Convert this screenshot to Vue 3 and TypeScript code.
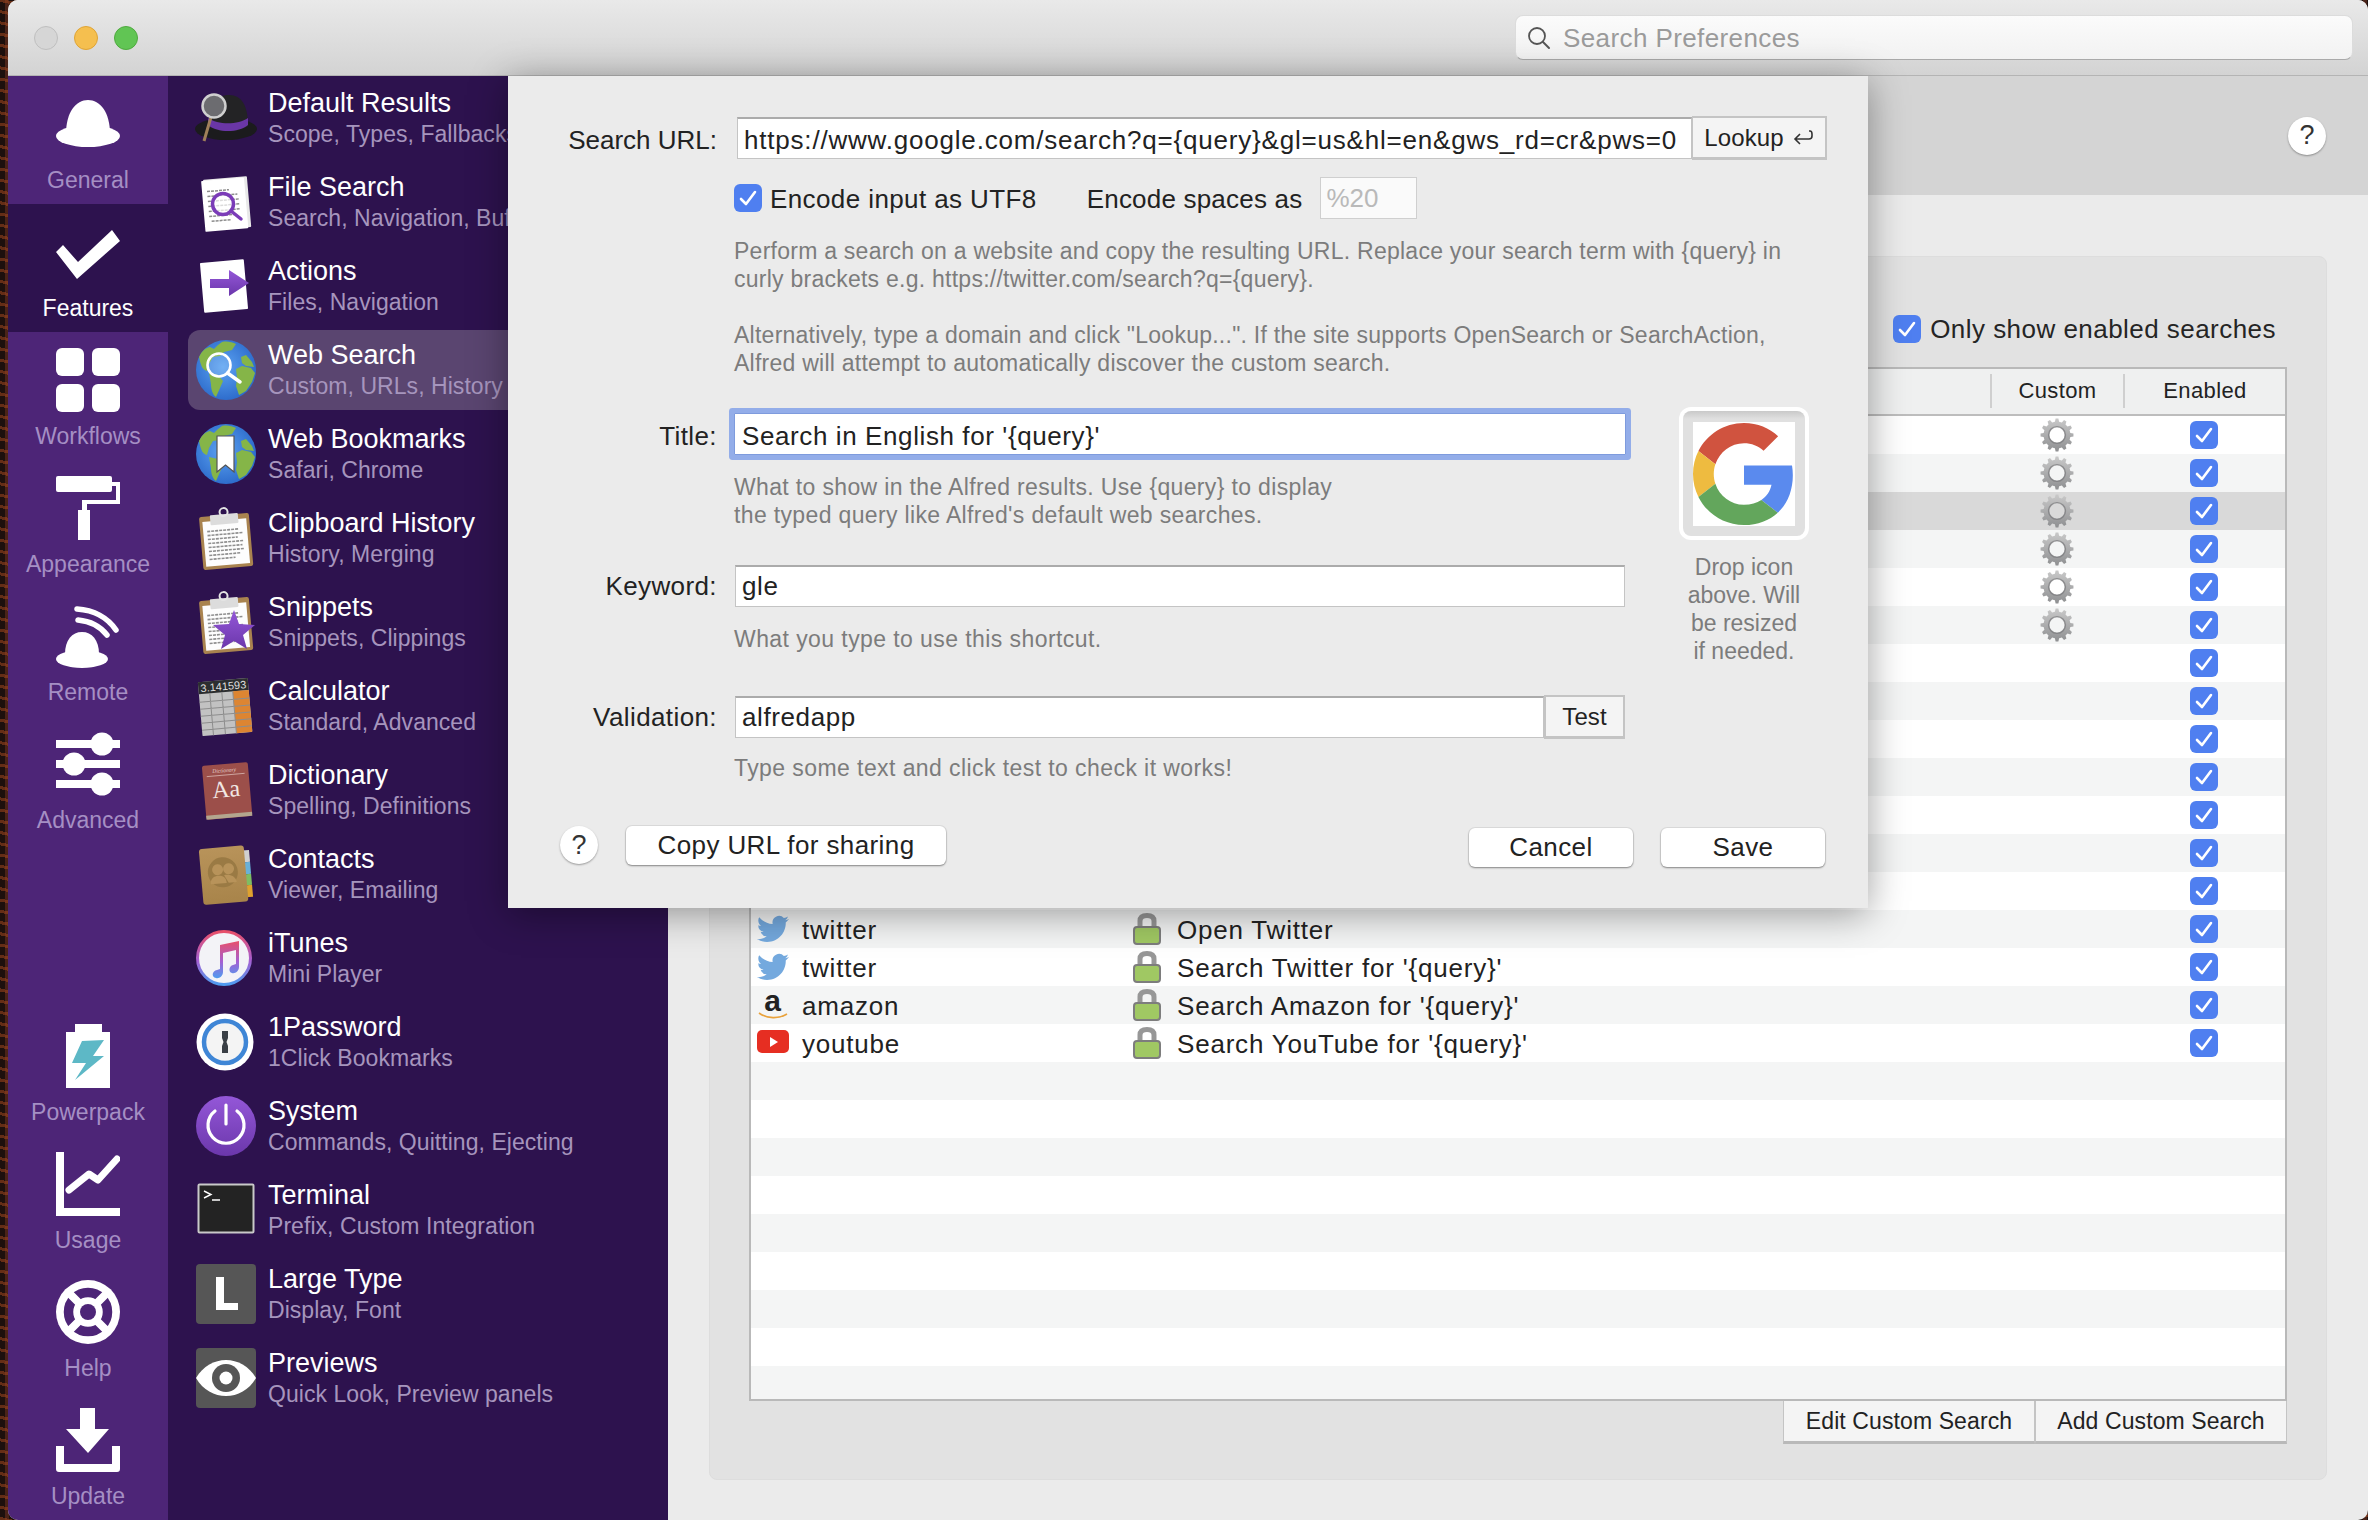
<script setup lang="ts">
// Alfred preferences - web search, custom search sheet
interface NavItem {
  key: string
  label: string
  active?: boolean
}

interface FeatureItem {
  icon: string
  title: string
  sub: string
  selected?: boolean
}

interface SearchRow {
  icon?: string
  keyword?: string
  title?: string
  custom?: boolean
  enabled?: boolean
  selected?: boolean
}

const topNav: NavItem[] = [
  { key: 'general', label: 'General' },
  { key: 'features', label: 'Features', active: true },
  { key: 'workflows', label: 'Workflows' },
  { key: 'appearance', label: 'Appearance' },
  { key: 'remote', label: 'Remote' },
  { key: 'advanced', label: 'Advanced' },
]

const bottomNav: NavItem[] = [
  { key: 'powerpack', label: 'Powerpack' },
  { key: 'usage', label: 'Usage' },
  { key: 'help', label: 'Help' },
  { key: 'update', label: 'Update' },
]

const features: FeatureItem[] = [
  { icon: 'default', title: 'Default Results', sub: 'Scope, Types, Fallbacks' },
  { icon: 'file', title: 'File Search', sub: 'Search, Navigation, Buffer' },
  { icon: 'actions', title: 'Actions', sub: 'Files, Navigation' },
  { icon: 'web', title: 'Web Search', sub: 'Custom, URLs, History', selected: true },
  { icon: 'bookmarks', title: 'Web Bookmarks', sub: 'Safari, Chrome' },
  { icon: 'clipboard', title: 'Clipboard History', sub: 'History, Merging' },
  { icon: 'snippets', title: 'Snippets', sub: 'Snippets, Clippings' },
  { icon: 'calculator', title: 'Calculator', sub: 'Standard, Advanced' },
  { icon: 'dictionary', title: 'Dictionary', sub: 'Spelling, Definitions' },
  { icon: 'contacts', title: 'Contacts', sub: 'Viewer, Emailing' },
  { icon: 'itunes', title: 'iTunes', sub: 'Mini Player' },
  { icon: 'onepassword', title: '1Password', sub: '1Click Bookmarks' },
  { icon: 'system', title: 'System', sub: 'Commands, Quitting, Ejecting' },
  { icon: 'terminal', title: 'Terminal', sub: 'Prefix, Custom Integration' },
  { icon: 'largetype', title: 'Large Type', sub: 'Display, Font' },
  { icon: 'previews', title: 'Previews', sub: 'Quick Look, Preview panels' },
]

const rows: SearchRow[] = [
  ...Array.from({ length: 6 }, (_, i) => ({ custom: true, enabled: true, selected: i === 2 })),
  ...Array.from({ length: 7 }, () => ({ enabled: true })),
  { icon: 'twitter', keyword: 'twitter', title: 'Open Twitter', enabled: true },
  { icon: 'twitter', keyword: 'twitter', title: "Search Twitter for '{query}'", enabled: true },
  { icon: 'amazon', keyword: 'amazon', title: "Search Amazon for '{query}'", enabled: true },
  { icon: 'youtube', keyword: 'youtube', title: "Search YouTube for '{query}'", enabled: true },
  ...Array.from({ length: 9 }, () => ({})),
]

// 齒輪外形，12 齒
function gearPath(teeth: number, outer: number, root: number, hole: number): string {
  const c = 18
  const step = (Math.PI * 2) / teeth
  const pts: string[] = []
  for (let i = 0; i < teeth; i++) {
    const a = i * step - Math.PI / 2
    const w = step * 0.2
    const list: [number, number][] = [
      [root, a - w * 1.5],
      [outer, a - w * 0.8],
      [outer, a + w * 0.8],
      [root, a + w * 1.5],
    ]
    for (const [r, t] of list) {
      pts.push(`${(c + r * Math.cos(t)).toFixed(2)} ${(c + r * Math.sin(t)).toFixed(2)}`)
    }
  }
  const body = 'M' + pts.join('L') + 'Z'
  return `${body}M${c - hole} ${c}a${hole} ${hole} 0 1 0 ${hole * 2} 0a${hole} ${hole} 0 1 0 ${-hole * 2} 0Z`
}

const gear = gearPath(12, 16.5, 13.5, 7.5)
</script>

<template>
  <div class="page">
    <svg class="defs" width="0" height="0" aria-hidden="true">
      <defs>
        <radialGradient id="globeFill" cx="45%" cy="45%" r="60%">
          <stop offset="0%" stop-color="#5da4f2" />
          <stop offset="100%" stop-color="#2a68c9" />
        </radialGradient>
        <linearGradient id="gearFill" x1="0" y1="0" x2="0" y2="1">
          <stop offset="0%" stop-color="#c9c9c9" />
          <stop offset="100%" stop-color="#8f9092" />
        </linearGradient>
        <linearGradient id="purpleFill" x1="0" y1="0" x2="0" y2="1">
          <stop offset="0%" stop-color="#9457d8" />
          <stop offset="100%" stop-color="#6b37ab" />
        </linearGradient>
        <linearGradient id="noteFill" x1="0" y1="0" x2="0" y2="1">
          <stop offset="0%" stop-color="#e8506a" />
          <stop offset="55%" stop-color="#a55fd2" />
          <stop offset="100%" stop-color="#4f9cf0" />
        </linearGradient>
        <linearGradient id="bookFill" x1="0" y1="0" x2="0" y2="1">
          <stop offset="0%" stop-color="#b8935a" />
          <stop offset="100%" stop-color="#a8844a" />
        </linearGradient>
        <g id="globe">
          <circle cx="30" cy="30" r="30" fill="url(#globeFill)" />
          <path
            fill="#85b548"
            d="M3 17 C6 11 9 8 14 7 L18 9 L22 5 L26 2 C31 1 36 2 40 4 L36 10 L28 12 L24 16 L17 17 L13 24 L11 31 C7 30 5 27 3 17Z"
          />
          <path fill="#85b548" d="M13 33 L22 35 L27 41 L24 48 L20 57 C17 55 15 50 15 44Z" />
          <path fill="#85b548" d="M40 29 L46 26 L55 28 L59 33 L56 42 L50 51 L43 55 L40 46 L41 38Z" />
          <path fill="#85b548" d="M45 17 L50 15 L56 22 L58 27 L50 26 L46 23Z" />
        </g>
        <g id="board">
          <g transform="rotate(-5 30 32)">
            <rect x="5" y="7" width="50" height="53" rx="2" fill="#a9834f" />
            <rect x="8" y="12" width="44" height="45" fill="#fdfdfd" />
            <path
              d="M12 22 H44 M12 26 H48 M12 30 H42 M12 34 H48 M12 38 H46 M12 42 H48 M12 46 H44 M12 50 H38"
              stroke="#8f8f8f"
              stroke-width="1.6"
              stroke-dasharray="3 1"
            />
            <rect x="16" y="6" width="28" height="10" rx="1" fill="#dcdcdc" />
            <circle cx="30" cy="4" r="4" fill="none" stroke="#e4e4e4" stroke-width="2" />
          </g>
        </g>
      </defs>
    </svg>

    <div class="window">
      <header class="titlebar">
        <span class="light close"></span>
        <span class="light min"></span>
        <span class="light zoom"></span>
        <div class="search-field">
          <svg viewBox="0 0 24 24" class="search-glass">
            <circle cx="10" cy="10" r="8" fill="none" stroke="#555" stroke-width="1.8" />
            <path d="M16 16 L22 22" stroke="#555" stroke-width="2" stroke-linecap="round" />
          </svg>
          <span class="search-text">Search Preferences</span>
        </div>
      </header>

      <div class="body">
        <nav class="nav">
          <div>
            <div v-for="n in topNav" :key="n.key" class="nav-item" :class="{ active: n.active }">
              <svg class="nav-icon" viewBox="0 0 64 64" fill="#fff">
                <template v-if="n.key === 'general'">
                  <path d="M10 42 C10 20 20 8 32 8 C44 8 54 20 54 42Z" />
                  <ellipse cx="32" cy="44" rx="32" ry="11" />
                </template>
                <polygon v-else-if="n.key === 'features'" points="0,32 7,25 22,42 56,10 64,21 21,59" />
                <template v-else-if="n.key === 'workflows'">
                  <rect x="0" y="0" width="28" height="28" rx="6" />
                  <rect x="36" y="0" width="28" height="28" rx="6" />
                  <rect x="0" y="36" width="28" height="28" rx="6" />
                  <rect x="36" y="36" width="28" height="28" rx="6" />
                </template>
                <template v-else-if="n.key === 'appearance'">
                  <rect x="0" y="0" width="56" height="16" rx="2" />
                  <path d="M56 6 H64 V28 H31 V34 H34 V64 H22 V34 H26 V24 H60 V10 H56Z" />
                </template>
                <template v-else-if="n.key === 'remote'">
                  <path d="M9 50 C9 36 16 28 26 28 C36 28 43 36 43 50Z" />
                  <ellipse cx="26" cy="55" rx="26" ry="9" />
                  <path
                    d="M21 5 C38 6 52 14 60 26 M22 16 C33 17 44 22 51 31"
                    fill="none"
                    stroke="#fff"
                    stroke-width="5.5"
                    stroke-linecap="round"
                  />
                </template>
                <template v-else>
                  <rect x="0" y="8" width="64" height="8" />
                  <rect x="0" y="28" width="64" height="8" />
                  <rect x="0" y="48" width="64" height="8" />
                  <circle cx="46" cy="12" r="11.5" />
                  <circle cx="18" cy="32" r="11.5" />
                  <circle cx="46" cy="52" r="11.5" />
                </template>
              </svg>
              <span class="nav-label">{{ n.label }}</span>
            </div>
          </div>
          <div>
            <div v-for="n in bottomNav" :key="n.key" class="nav-item">
              <svg class="nav-icon" viewBox="0 0 64 64" fill="#fff">
                <template v-if="n.key === 'powerpack'">
                  <path d="M19 0 H46 V8 H54 V64 H10 V8 H19Z" />
                  <polygon points="26,17 48,16 37,32 48,32 19,56 30,39 16,39" fill="#5db8c6" />
                </template>
                <template v-else-if="n.key === 'usage'">
                  <path d="M0 0 H8 V56 H64 V64 H0Z" />
                  <path
                    d="M13 38 L33 22 L42 28 L61 7"
                    fill="none"
                    stroke="#fff"
                    stroke-width="7"
                    stroke-linecap="round"
                    stroke-linejoin="round"
                  />
                </template>
                <template v-else-if="n.key === 'help'">
                  <circle cx="32" cy="32" r="32" />
                  <circle cx="32" cy="32" r="19.5" fill="none" stroke="#4d2577" stroke-width="9.5" />
                  <path d="M14 14 L26 26 M50 14 L38 26 M14 50 L26 38 M50 50 L38 38" stroke="#fff" stroke-width="8" />
                  <circle cx="32" cy="32" r="8" fill="#4d2577" />
                </template>
                <template v-else>
                  <path d="M24 0 H39 V21 H53 L32 45 L10 21 H24Z" />
                  <path d="M0 38 H8 V56 H56 V38 H64 V61 Q64 64 61 64 H3 Q0 64 0 61Z" />
                </template>
              </svg>
              <span class="nav-label">{{ n.label }}</span>
            </div>
          </div>
        </nav>

        <aside class="features">
          <div v-for="f in features" :key="f.title" class="feature" :class="{ selected: f.selected }">
            <svg class="feature-icon" viewBox="0 0 60 60">
              <template v-if="f.icon === 'default'">
                <ellipse cx="30" cy="41" rx="31" ry="11" fill="#1b1b1d" />
                <path d="M12 38 C12 16 20 7 33 7 C46 7 52 18 52 38 C42 45 22 45 12 38Z" fill="#232325" />
                <path d="M12 30 C22 37 42 37 52 30 L52 37 C42 45 22 45 12 37Z" fill="#6a36a6" />
                <path d="M15 29 L8 53" stroke="#a0805a" stroke-width="3" />
                <circle cx="18" cy="18" r="11.5" fill="#6c6c70" stroke="#cfcfcf" stroke-width="2.5" />
              </template>
              <template v-else-if="f.icon === 'file'">
                <rect x="9" y="6" width="44" height="51" rx="1" fill="#e8e8e8" transform="rotate(-5 30 30)" />
                <rect x="7" y="7" width="43" height="51" rx="1" fill="#fff" transform="rotate(-5 30 30)" />
                <path
                  d="M12 18 H34 M12 23 H42 M12 28 H44 M12 33 H44 M12 38 H44 M12 43 H38 M14 48 H34"
                  stroke="#8c8c8c"
                  stroke-width="1.5"
                  stroke-dasharray="3 1"
                  transform="rotate(-5 30 30)"
                />
                <circle cx="27" cy="32" r="10.5" fill="#ffffffb0" stroke="#7b3cb8" stroke-width="3.5" />
                <path d="M35 39 L45 47" stroke="#7b3cb8" stroke-width="3.5" stroke-linecap="round" />
              </template>
              <template v-else-if="f.icon === 'actions'">
                <rect x="6" y="5" width="44" height="50" rx="1" fill="#fff" transform="rotate(-5 28 30)" />
                <path d="M14 23 H33 V14 L53 27 L33 40 V32 H14Z" fill="url(#purpleFill)" />
              </template>
              <template v-else-if="f.icon === 'web'">
                <use href="#globe" />
                <circle cx="23" cy="25" r="11.5" fill="#ffffff22" stroke="#fff" stroke-width="2.6" />
                <path d="M31.5 33 L44 42" stroke="#fff" stroke-width="3.5" stroke-linecap="round" />
              </template>
              <template v-else-if="f.icon === 'bookmarks'">
                <use href="#globe" />
                <path d="M21 12 H38 V48 L29.5 41 L21 48Z" fill="#fff" stroke="#555" stroke-width="1.2" />
              </template>
              <use v-else-if="f.icon === 'clipboard'" href="#board" />
              <template v-else-if="f.icon === 'snippets'">
                <use href="#board" />
                <polygon
                  points="38,18 43,32 59,33 47,43 51,57 38,49 25,57 29,43 17,33 33,32"
                  fill="url(#purpleFill)"
                />
              </template>
              <template v-else-if="f.icon === 'calculator'">
                <g transform="rotate(-5 30 30)">
                  <rect x="4" y="4" width="50" height="54" rx="1" fill="#c2c2c2" />
                  <rect x="4" y="4" width="50" height="12" fill="#2c2e30" />
                  <text x="52" y="14" class="calc-text" text-anchor="end">3.141593</text>
                  <rect x="38" y="16" width="16" height="42" fill="#dd8532" />
                  <path
                    d="M4 24 H54 M4 31 H54 M4 38 H54 M4 45 H54 M4 52 H54 M15 16 V58 M27 16 V58 M38 16 V58"
                    stroke="#8d8d8d"
                    stroke-width="1"
                  />
                </g>
              </template>
              <template v-else-if="f.icon === 'dictionary'">
                <g transform="rotate(-5 30 30)">
                  <rect x="8" y="4" width="46" height="54" rx="2" fill="#9c4f4a" />
                  <rect x="8" y="54" width="46" height="4" fill="#b3a58e" />
                  <path d="M12 15 H50" stroke="#d8b7b0" stroke-width="0.8" />
                  <text x="30" y="12" class="dict-small" text-anchor="middle">Dictionary</text>
                  <text x="30" y="37" class="dict-big" text-anchor="middle">Aa</text>
                </g>
              </template>
              <template v-else-if="f.icon === 'contacts'">
                <g transform="rotate(-5 30 30)">
                  <rect x="48" y="8" width="7" height="12" fill="#d0d0d0" />
                  <rect x="48" y="20" width="7" height="12" fill="#69b1d8" />
                  <rect x="48" y="32" width="7" height="11" fill="#7fbd62" />
                  <rect x="48" y="43" width="7" height="12" fill="#dfa22f" />
                  <rect x="5" y="3" width="45" height="56" rx="3" fill="url(#bookFill)" />
                  <circle cx="27" cy="28" r="15" fill="#9a7a44" />
                  <circle cx="22" cy="25" r="5.5" fill="#b8935a" />
                  <circle cx="33" cy="25" r="5.5" fill="#b8935a" />
                  <path d="M14 39 C14 33 18 31 22 31 C26 31 30 33 30 39Z" fill="#b8935a" />
                  <path d="M28 31 C33 30 40 33 40 39 H32Z" fill="#b8935a" />
                </g>
              </template>
              <template v-else-if="f.icon === 'itunes'">
                <g transform="translate(0 2)">
                  <circle cx="28" cy="28" r="26.5" fill="#f3f3f7" stroke="url(#noteFill)" stroke-width="3" />
                  <path
                    d="M24 15 L43 11 V37 C43 41 39 44 36 43 C32 42 33 36 37 35 L40 34 V20 L27 23 V42 C27 46 23 49 20 48 C15 47 16 41 21 40 L24 39Z"
                    fill="url(#noteFill)"
                  />
                </g>
              </template>
              <template v-else-if="f.icon === 'onepassword'">
                <circle cx="29" cy="30" r="28.500" fill="#fff" />
                <circle cx="29" cy="30" r="21" fill="#f4f4f4" stroke="#3f86d6" stroke-width="4.5" />
                <path d="M26 19 H32 V26 L30.500 30 L32 34 V41 H26 V34 L27.500 30 L26 26Z" fill="#3a3f45" />
              </template>
              <template v-else-if="f.icon === 'system'">
                <circle cx="30" cy="30" r="30" fill="url(#purpleFill)" />
                <path d="M19 15 A18 18 0 1 0 41 15" fill="none" stroke="#fff" stroke-width="3.2" stroke-linecap="round" />
                <path d="M30 9 V28" stroke="#fff" stroke-width="3.2" stroke-linecap="round" />
              </template>
              <template v-else-if="f.icon === 'terminal'">
                <rect x="2.500" y="4.500" width="55" height="48" rx="1" fill="#232323" stroke="#c9c9c9" stroke-width="2" />
                <path d="M8 11 L15 14.500 L8 18 M16 20 H24" fill="none" stroke="#fff" stroke-width="1.4" />
              </template>
              <template v-else-if="f.icon === 'largetype'">
                <rect x="0" y="0" width="60" height="60" rx="4" fill="#565656" />
                <path d="M20 13 H28 V39 H42 V46 H20Z" fill="#fff" />
              </template>
              <template v-else>
                <rect x="0" y="0" width="60" height="60" rx="4" fill="#565656" />
                <path d="M0 30 C14 6 46 6 60 30 C46 54 14 54 0 30Z" fill="#fff" />
                <circle cx="30" cy="30" r="14" fill="#565656" />
                <circle cx="30" cy="30" r="6.500" fill="#fff" />
              </template>
            </svg>
            <div class="feature-text">
              <div class="feature-title">{{ f.title }}</div>
              <div class="feature-sub">{{ f.sub }}</div>
            </div>
          </div>
        </aside>

        <main class="content">
          <div class="band">
            <span class="help-btn">?</span>
          </div>
          <section class="panel">
            <label class="filter">
              <span class="check">
                <svg viewBox="0 0 28 28"><path d="M7 15 L12 20 L21 8" /></svg>
              </span>
              <span class="filter-text">Only show enabled searches</span>
            </label>
            <div class="table">
              <div class="thead grid">
                <span></span>
                <span></span>
                <span class="th">Custom</span>
                <span class="th">Enabled</span>
              </div>
              <div class="tbody">
                <div
                  v-for="(r, i) in rows"
                  :key="i"
                  class="tr grid"
                  :class="{ stripe: i % 2 === 1, selected: r.selected }"
                >
                  <span class="cell name">
                    <span class="row-icon">
                      <svg v-if="r.icon === 'twitter'" viewBox="0 0 24 24" width="32" height="32">
                        <path
                          fill="#74a9de"
                          d="M23.953 4.57a10 10 0 01-2.825.775 4.958 4.958 0 002.163-2.723c-.951.555-2.005.959-3.127 1.184a4.92 4.92 0 00-8.384 4.482C7.69 8.095 4.067 6.13 1.64 3.162a4.822 4.822 0 00-.666 2.475c0 1.71.87 3.213 2.188 4.096a4.904 4.904 0 01-2.228-.616v.06a4.923 4.923 0 003.946 4.827 4.996 4.996 0 01-2.212.085 4.936 4.936 0 004.604 3.417 9.867 9.867 0 01-6.102 2.105c-.39 0-.779-.023-1.17-.067a13.995 13.995 0 007.557 2.209c9.053 0 13.998-7.496 13.998-13.985 0-.21 0-.42-.015-.63A9.935 9.935 0 0024 4.59z"
                        />
                      </svg>
                      <svg v-else-if="r.icon === 'amazon'" viewBox="0 0 32 32" width="32" height="32">
                        <text x="16" y="22" class="amazon-a" text-anchor="middle">a</text>
                        <path d="M2 24 C10 30 22 30 30 25" fill="none" stroke="#e9a23b" stroke-width="1.6" />
                      </svg>
                      <svg v-else-if="r.icon === 'youtube'" viewBox="0 0 32 32" width="32" height="32">
                        <rect x="0" y="3" width="32" height="23" rx="5" fill="#e62e22" />
                        <path d="M13 10 L21 15 L13 20Z" fill="#fff" />
                      </svg>
                    </span>
                    <span class="cell-text">{{ r.keyword }}</span>
                  </span>
                  <span class="cell title">
                    <svg v-if="r.title" viewBox="0 0 28 32" width="28" height="32" class="lock">
                      <path d="M7 16 V8 Q7 2.500 14 2.500 Q21 2.500 21 8 V16" fill="none" stroke="#979797" stroke-width="5" />
                      <rect x="1" y="14" width="26" height="17" rx="3" fill="#a0c863" stroke="#7d7d7d" stroke-width="2" />
                    </svg>
                    <span class="cell-text">{{ r.title }}</span>
                  </span>
                  <span class="cell center">
                    <svg v-if="r.custom" viewBox="0 0 36 36" width="36" height="36">
                      <path :d="gear" fill="url(#gearFill)" fill-rule="evenodd" />
                      <circle cx="18" cy="18" r="8.500" fill="none" stroke="#77787a" stroke-width="1.2" opacity="0.7" />
                    </svg>
                  </span>
                  <span class="cell center">
                    <span v-if="r.enabled" class="check">
                      <svg viewBox="0 0 28 28"><path d="M7 15 L12 20 L21 8" /></svg>
                    </span>
                  </span>
                </div>
              </div>
            </div>
            <div class="table-actions">
              <button class="flat-btn">Edit Custom Search</button>
              <button class="flat-btn">Add Custom Search</button>
            </div>
          </section>
        </main>
      </div>

      <!-- 編輯 sheet -->
      <div class="dialog">
        <div class="form-row first">
          <span class="label">Search URL:</span>
          <span class="input grow url">https://www.google.com/search?q={query}&amp;gl=us&amp;hl=en&amp;gws_rd=cr&amp;pws=0</span>
          <button class="flat-btn lookup">
            Lookup
            <svg viewBox="0 0 22 18" width="22" height="18">
              <path d="M17 2 H18 Q20 2 20 5 V7 Q20 10 17 10 H3 M8 5 L3 10 L8 15" fill="none" stroke="#333" stroke-width="1.6" />
            </svg>
          </button>
        </div>
        <div class="encode-row">
          <span class="check">
            <svg viewBox="0 0 28 28"><path d="M7 15 L12 20 L21 8" /></svg>
          </span>
          <span class="encode-a">Encode input as UTF8</span>
          <span class="encode-b">Encode spaces as</span>
          <span class="input spaces">%20</span>
        </div>
        <p class="hint intro">
          Perform a search on a website and copy the resulting URL. Replace your search term with {query} in<br />
          curly brackets e.g. https://twitter.com/search?q={query}.<br />
          <br />
          Alternatively, type a domain and click "Lookup...". If the site supports OpenSearch or SearchAction,<br />
          Alfred will attempt to automatically discover the custom search.
        </p>

        <div class="lower">
          <div class="fields">
            <div class="form-row title-row">
              <span class="label">Title:</span>
              <span class="input grow focused">Search in English for '{query}'</span>
            </div>
            <p class="hint title-hint">
              What to show in the Alfred results. Use {query} to display<br />
              the typed query like Alfred's default web searches.
            </p>
            <div class="form-row keyword-row">
              <span class="label">Keyword:</span>
              <span class="input grow">gle</span>
            </div>
            <p class="hint field-hint">What you type to use this shortcut.</p>
            <div class="form-row validation-row">
              <span class="label">Validation:</span>
              <span class="input grow">alfredapp</span>
              <button class="flat-btn test">Test</button>
            </div>
            <p class="hint field-hint last">Type some text and click test to check it works!</p>
          </div>
          <div class="icon-col">
            <div class="well">
              <div class="well-inner">
                <svg viewBox="0 0 48 48" class="g-logo">
                  <path fill="#d0533f" d="M24 9.500c3.540 0 6.710 1.220 9.210 3.600l6.850-6.850C35.900 2.380 30.470 0 24 0 14.620 0 6.510 5.380 2.560 13.220l7.980 6.190C12.430 13.720 17.740 9.500 24 9.500z" />
                  <path fill="#5a8aee" d="M46.980 24.550c0-1.570-.15-3.090-.38-4.550H24v9.020h12.940c-.58 2.960-2.260 5.480-4.780 7.180l7.730 6c4.510-4.180 7.090-10.360 7.090-17.650z" />
                  <path fill="#eebb40" d="M10.530 28.590c-.48-1.450-.76-2.990-.76-4.590s.27-3.140.76-4.590l-7.980-6.190C.92 16.460 0 20.120 0 24c0 3.880.92 7.540 2.560 10.780l7.970-6.190z" />
                  <path fill="#63a65c" d="M24 48c6.480 0 11.930-2.130 15.890-5.810l-7.730-6c-2.150 1.450-4.920 2.300-8.160 2.300-6.260 0-11.570-4.220-13.470-9.910l-7.980 6.190C6.510 42.620 14.620 48 24 48z" />
                </svg>
              </div>
            </div>
            <p class="drop-hint">Drop icon<br />above. Will<br />be resized<br />if needed.</p>
          </div>
        </div>

        <div class="dialog-footer">
          <span class="help-btn">?</span>
          <button class="pill copy">Copy URL for sharing</button>
          <button class="pill cancel">Cancel</button>
          <button class="pill save">Save</button>
        </div>
      </div>
    </div>
  </div>
</template>

<style>
html,
body {
  margin: 0;
  background: #2a1510;
}
</style>

<style scoped>
.page {
  position: relative;
  width: 2368px;
  height: 1520px;
  overflow: hidden;
  font-family: 'Liberation Sans', Arial, sans-serif;
  background:
    repeating-linear-gradient(12deg, rgba(160, 70, 30, 0.55) 0 3px, transparent 3px 11px),
    repeating-linear-gradient(90deg, #1d100d 0 5px, #4a2318 5px 9px);
}

.defs {
  position: absolute;
}

.window {
  position: relative;
  margin-left: 8px;
  width: 2360px;
  height: 1520px;
  display: flex;
  flex-direction: column;
  border-radius: 10px;
  overflow: hidden;
  background: #ebebeb;
}

/* 標題列 */
.titlebar {
  flex: none;
  height: 76px;
  box-sizing: border-box;
  display: flex;
  align-items: center;
  gap: 16px;
  padding: 0 15px 0 26px;
  background: linear-gradient(#e9e9e9, #d3d3d3);
  border-bottom: 1px solid #b4b4b4;
}

.light {
  width: 24px;
  height: 24px;
  box-sizing: border-box;
  border-radius: 50%;
  border: 1px solid;
}

.light.close {
  background: #d6d6d6;
  border-color: #bfbfbf;
}

.light.min {
  background: #f5bf4f;
  border-color: #dfa436;
}

.light.zoom {
  background: #61c554;
  border-color: #4faa3f;
}

.search-field {
  margin-left: auto;
  width: 838px;
  height: 45px;
  box-sizing: border-box;
  display: flex;
  align-items: center;
  gap: 12px;
  padding-left: 11px;
  font-size: 26px;
  color: #9b9b9b;
  border-radius: 8px;
  background: linear-gradient(#fbfbfb, #f2f2f2);
  border: 1px solid #dcdcdc;
  border-bottom-color: #a9a9a9;
}

.search-text {
  letter-spacing: 0.4px;
  padding-top: 2px;
}

.search-glass {
  width: 24px;
  height: 24px;
}

.body {
  flex: 1;
  display: flex;
  min-height: 0;
}

/* 左側導覽 */
.nav {
  flex: none;
  width: 160px;
  display: flex;
  flex-direction: column;
  justify-content: space-between;
  background: #4d2577;
}

.nav-item {
  height: 128px;
  box-sizing: border-box;
  padding-top: 16px;
  display: flex;
  flex-direction: column;
  align-items: center;
}

.nav-item.active {
  background: #2d124e;
}

.nav-icon {
  width: 64px;
  height: 64px;
  flex: none;
}

.nav-label {
  margin-top: 10px;
  line-height: 28px;
  font-size: 23px;
  color: #a58fc4;
}

.nav-item.active .nav-label {
  color: #fff;
}

/* 功能清單 */
.features {
  flex: none;
  width: 500px;
  box-sizing: border-box;
  padding: 2px 0 0 20px;
  background: #2d124e;
  display: flex;
  flex-direction: column;
  gap: 4px;
}

.feature {
  flex: none;
  height: 80px;
  display: flex;
  align-items: flex-start;
  gap: 12px;
  padding-left: 8px;
  border-radius: 12px 0 0 12px;
}

.feature.selected {
  background: #5a4570;
}

.feature-icon {
  flex: none;
  margin-top: 10px;
  width: 60px;
  height: 60px;
  overflow: visible;
}

.feature-text {
  padding-top: 10px;
  white-space: nowrap;
}

.feature-title {
  font-size: 27px;
  line-height: 30px;
  color: #fff;
}

.feature-sub {
  font-size: 23px;
  line-height: 32px;
  color: #a695bd;
  letter-spacing: 0.05px;
}

.calc-text {
  font-size: 11px;
  fill: #ddd;
}

.dict-small {
  font-size: 5.500px;
  font-style: italic;
  fill: #e6d3cf;
  font-family: 'Liberation Serif', serif;
}

.dict-big {
  font-size: 24px;
  fill: #f1e6e2;
  font-family: 'Liberation Serif', serif;
}

/* 右側內容 */
.content {
  flex: 1;
  min-width: 0;
  display: flex;
  flex-direction: column;
}

.band {
  flex: none;
  height: 119px;
  box-sizing: border-box;
  display: flex;
  align-items: center;
  justify-content: flex-end;
  padding-right: 42px;
  background: #d4d4d4;
}

.help-btn {
  width: 38px;
  height: 38px;
  flex: none;
  display: flex;
  align-items: center;
  justify-content: center;
  border-radius: 50%;
  background: #fff;
  font-size: 27px;
  color: #333;
  box-shadow: 0 1px 2px rgba(0, 0, 0, 0.35);
}

.panel {
  flex: 1;
  min-height: 0;
  margin: 61px 41px 40px 41px;
  box-sizing: border-box;
  padding: 0 39px;
  display: flex;
  flex-direction: column;
  background: #e2e2e2;
  border: 1px solid #dddddd;
  border-radius: 8px;
}

.filter {
  flex: none;
  margin-top: 58px;
  margin-bottom: 24px;
  padding-right: 11px;
  height: 28px;
  display: flex;
  align-items: center;
  justify-content: flex-end;
  gap: 9px;
  font-size: 26px;
  color: #252525;
}

.filter-text {
  letter-spacing: 0.46px;
}

.check {
  flex: none;
  width: 28px;
  height: 28px;
  display: inline-flex;
  border-radius: 6px;
  background: #4f7ff0;
}

.check path {
  fill: none;
  stroke: #fff;
  stroke-width: 2.6;
  stroke-linecap: round;
  stroke-linejoin: round;
}

.table {
  flex: none;
  height: 1034px;
  box-sizing: border-box;
  display: flex;
  flex-direction: column;
  background: #fff;
  border: 2px solid #b9b9b9;
}

.grid {
  display: grid;
  grid-template-columns: 382px 857px 133px 1fr;
}

.thead {
  flex: none;
  height: 47px;
  box-sizing: border-box;
  padding-top: 5px;
  background: #eff0f0;
  border-bottom: 2px solid #bdbdbd;
}

.th {
  height: 34px;
  display: flex;
  align-items: center;
  justify-content: center;
  font-size: 22px;
  letter-spacing: 0.4px;
  color: #222;
  border-left: 2px solid #cfcfcf;
}

.tbody {
  flex: 1;
  min-height: 0;
  overflow: hidden;
}

.tr {
  height: 38px;
  background: #fff;
}

.tr.stripe {
  background: #f4f5f5;
}

.tr.selected {
  background: #d9d9d9;
}

.cell {
  display: flex;
  align-items: center;
  font-size: 26px;
  letter-spacing: 0.8px;
  color: #222;
  white-space: nowrap;
}

.cell-text {
  padding-top: 3px;
}

.cell.name {
  padding-left: 6px;
}

.row-icon {
  flex: none;
  width: 32px;
  height: 32px;
  margin-right: 13px;
}

.amazon-a {
  font-size: 30px;
  font-weight: 700;
  fill: #222;
}

.lock {
  flex: none;
  margin-right: 16px;
}

.cell.center {
  justify-content: center;
}

.table-actions {
  flex: none;
  display: flex;
  justify-content: flex-end;
}

.flat-btn {
  height: 43px;
  box-sizing: border-box;
  padding: 0;
  width: 252px;
  font-family: inherit;
  font-size: 23px;
  letter-spacing: 0.1px;
  color: #222;
  background: #f4f4f4;
  border: 1px solid #c4c4c4;
  border-top: none;
  border-bottom: 3px solid #b9b9b9;
}

/* 編輯 sheet */
.dialog {
  position: absolute;
  left: 500px;
  top: 76px;
  width: 1360px;
  height: 832px;
  box-sizing: border-box;
  padding: 40px 41px 0 0;
  background: #ebebeb;
  box-shadow: 0 6px 36px rgba(0, 0, 0, 0.38);
  font-size: 26px;
  color: #222;
}

.form-row {
  display: flex;
  align-items: center;
}

.form-row.first {
  height: 44px;
}

.label {
  flex: none;
  width: 209px;
  margin-right: 20px;
  text-align: right;
  white-space: nowrap;
}

.form-row.first .label,
.title-row .label {
  padding-top: 4px;
}

.fields .label {
  margin-right: 18px;
  letter-spacing: 0.4px;
}

.input {
  box-sizing: border-box;
  height: 42px;
  display: flex;
  align-items: center;
  padding-left: 6px;
  letter-spacing: 0.6px;
  background: #fff;
  border: 1px solid #c4c4c4;
  border-top: 2px solid #ababab;
  white-space: nowrap;
}

.input.grow {
  flex: 1;
  min-width: 0;
}

.form-row.first .input {
  padding: 4px 0 0 6px;
}

.input.url {
  letter-spacing: 0.8px;
}

.lookup {
  flex: none;
  width: 135px;
  height: 44px;
  display: flex;
  align-items: center;
  justify-content: center;
  gap: 8px;
  font-size: 24px;
  border: 2px solid #c4c4c4;
  border-left: 1px solid #c4c4c4;
  border-bottom-width: 3px;
}

.encode-row {
  margin-top: 17px;
  margin-left: 226px;
  height: 42px;
  display: flex;
  align-items: center;
}

.encode-a {
  margin-left: 8px;
  padding-top: 2px;
  letter-spacing: 0.4px;
}

.encode-b {
  margin-left: 50px;
  padding-top: 2px;
  letter-spacing: 0.2px;
}

.spaces {
  width: 97px;
  margin-left: 18px;
  padding-left: 5px;
  letter-spacing: 0;
  color: #b9b9b9;
  border: 1px solid #cfcfcf;
  background: #fafafa;
}

.hint {
  margin: 0;
  font-size: 23px;
  line-height: 28px;
  letter-spacing: 0.35px;
  color: #7c7c7c;
  white-space: nowrap;
}

.intro {
  margin: 18px 0 0 226px;
  letter-spacing: 0.25px;
}

.lower {
  margin-top: 36px;
  display: flex;
  align-items: flex-start;
}

.fields {
  flex: none;
  width: 1117px;
}

.title-row {
  height: 42px;
}

.focused {
  margin: 0 -1px;
  padding: 4px 0 0 7px;
  border: 1px solid #7e9bdd;
  box-shadow: 0 0 0 5px #93ade9;
  border-radius: 1px;
}

.title-hint {
  margin: 18px 0 0 226px;
}

.keyword-row {
  margin-top: 36px;
  height: 42px;
}

.field-hint {
  margin: 18px 0 0 226px;
  letter-spacing: 0.42px;
}

.field-hint.last {
  margin-top: 15px;
}

.validation-row {
  margin-top: 42px;
  height: 44px;
}

.test {
  flex: none;
  width: 81px;
  height: 44px;
  font-size: 24px;
  border: 2px solid #c4c4c4;
  border-bottom-width: 3px;
}

.icon-col {
  flex: none;
  width: 130px;
  margin-left: 54px;
  margin-top: -6px;
  display: flex;
  flex-direction: column;
  align-items: center;
}

.well {
  width: 130px;
  height: 133px;
  box-sizing: border-box;
  padding: 4px;
  border-radius: 12px;
  background: #fff;
}

.well-inner {
  height: 100%;
  box-sizing: border-box;
  padding: 11px 10px;
  display: flex;
  background: linear-gradient(#c9c9c9 0, #e0e0e0 8px);
  border-radius: 8px;
}

.g-logo {
  width: 102px;
  height: 104px;
  background: #fff;
  flex: none;
}

.drop-hint {
  margin: 13px 0 0;
  text-align: center;
  font-size: 23px;
  line-height: 28px;
  color: #7c7c7c;
  white-space: nowrap;
}

.dialog-footer {
  margin-top: 44px;
  margin-right: 2px;
  display: flex;
  align-items: flex-start;
  padding-left: 52px;
}

.pill {
  height: 39px;
  box-sizing: border-box;
  padding: 0;
  font-family: inherit;
  font-size: 26px;
  letter-spacing: 0.4px;
  color: #222;
  background: #fff;
  border: none;
  border-radius: 6px;
  box-shadow: 0 1px 2px rgba(0, 0, 0, 0.4), 0 0 0 1px rgba(0, 0, 0, 0.06);
}

.copy {
  width: 320px;
  margin-left: 28px;
}

.cancel {
  width: 164px;
  margin-left: auto;
  margin-top: 2px;
}

.save {
  width: 164px;
  margin-left: 28px;
  margin-top: 2px;
}
</style>
